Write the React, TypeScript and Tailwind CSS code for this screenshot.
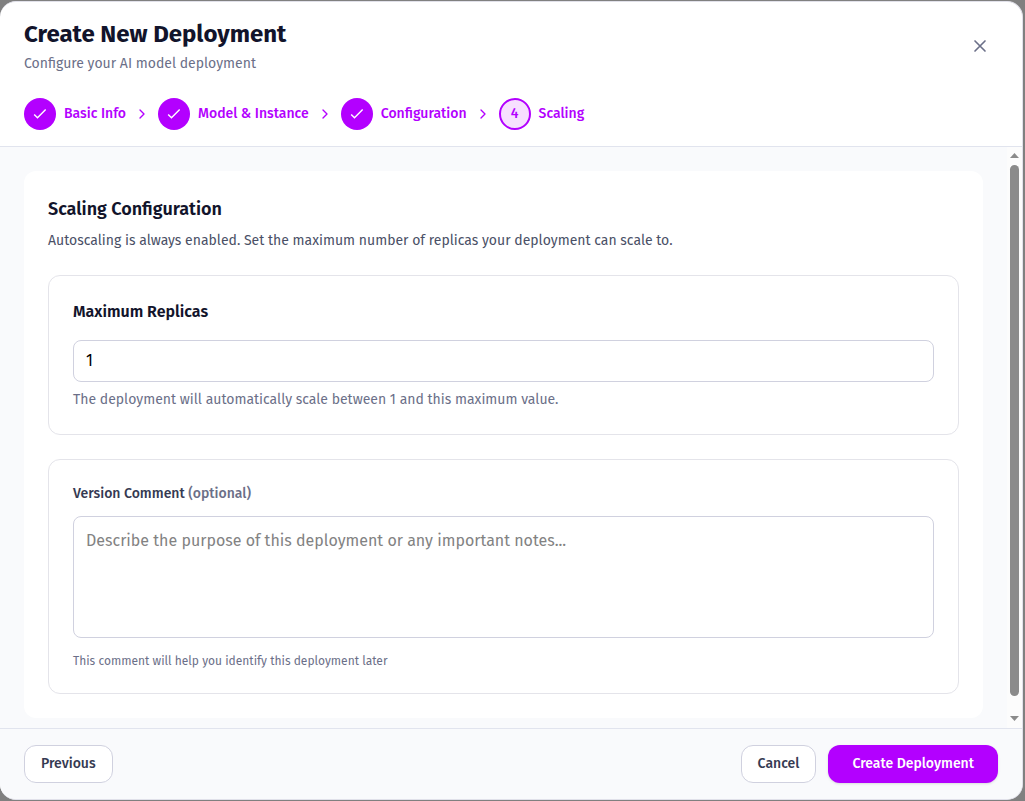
import { useState } from "react";

const steps = ["Basic Info", "Model & Instance", "Configuration", "Scaling"];
const currentStep = 3;

function CheckIcon() {
  return (
    <svg className="size-5" viewBox="0 0 24 24" fill="none" stroke="currentColor" strokeWidth={1.7} aria-hidden="true">
      <path d="M5 12.5l4 4L18.8 6.5" />
    </svg>
  );
}

function ChevronIcon() {
  return (
    <svg className="size-4" viewBox="0 0 24 24" fill="none" stroke="currentColor" strokeWidth={2} strokeLinecap="round" strokeLinejoin="round" aria-hidden="true">
      <path d="M9 6l6 6-6 6" />
    </svg>
  );
}

function CloseIcon() {
  return (
    <svg className="size-5" viewBox="0 0 24 24" fill="none" stroke="currentColor" strokeWidth={2} strokeLinecap="round" strokeLinejoin="round" aria-hidden="true">
      <path d="M6 18L18 6M6 6l12 12" />
    </svg>
  );
}

function Stepper() {
  return (
    <ol className="mt-6 flex items-center gap-2 text-sm font-medium text-[#b300ff]">
      {steps.map((label, i) => (
        <li key={label} className="flex items-center gap-2">
          {i < currentStep ? (
            <span className="flex size-8 items-center justify-center rounded-full bg-[#b300ff] text-white">
              <CheckIcon />
            </span>
          ) : (
            <span className="flex size-8 items-center justify-center rounded-full border-2 border-[#b300ff] bg-[#f7e0ff]">
              {i + 1}
            </span>
          )}
          <span>{label}</span>
          {i < steps.length - 1 && <ChevronIcon />}
        </li>
      ))}
    </ol>
  );
}

function ScrollTrack() {
  return (
    <div className="flex w-[15px] shrink-0 flex-col items-center bg-[#fcfcfc] py-1 text-[#8b8b8b]" aria-hidden="true">
      <svg className="h-3 w-[9px]" viewBox="0 0 9 12" fill="currentColor">
        <path d="M4.5 2L9 7H0z" />
      </svg>
      <div className="mt-[2px] w-[9px] flex-1 rounded-full bg-current" />
      <svg className="mt-4 h-3 w-[9px]" viewBox="0 0 9 12" fill="currentColor">
        <path d="M0 4h9L4.5 9z" />
      </svg>
    </div>
  );
}

export default function App() {
  const [replicas, setReplicas] = useState("1");
  const [comment, setComment] = useState("");

  return (
    <div className="h-screen bg-[#808080] py-px pr-[2px] font-['Fira_Sans','Noto_Sans',sans-serif]">
      <div role="dialog" aria-labelledby="dialog-title" className="flex h-full flex-col overflow-hidden rounded-2xl border-y border-r border-[#e1e1ea] bg-white">
        <header className="border-b border-[#e1e4ee] px-6 py-4">
          <div className="flex items-center justify-between">
            <div>
              <h2 id="dialog-title" className="text-2xl font-bold text-[#12142b]">Create New Deployment</h2>
              <p className="mt-1 text-sm text-[#6b6f88]">Configure your AI model deployment</p>
            </div>
            <button type="button" aria-label="Close" className="rounded-lg p-2 text-[#6b6f88]">
              <CloseIcon />
            </button>
          </div>
          <Stepper />
        </header>

        <div className="flex min-h-0 flex-1 bg-[#f9fafc]">
          <main className="min-w-0 flex-1 overflow-y-auto p-6 [scrollbar-width:none]">
            <section className="rounded-xl bg-white p-6">
              <h3 className="text-lg font-semibold text-[#12142b]">Scaling Configuration</h3>
              <p className="mt-2 text-sm text-[#4a5066]">
                Autoscaling is always enabled. Set the maximum number of replicas your deployment can scale to.
              </p>

              <div className="mt-6 rounded-xl border border-[#e4e4ea] p-6">
                <label htmlFor="max-replicas" className="block font-semibold text-[#12142b]">
                  Maximum Replicas
                </label>
                <input
                  id="max-replicas"
                  className="mt-4 block w-full rounded-lg border border-[#d0d1df] px-3 py-2 text-black outline-none"
                  inputMode="numeric"
                  value={replicas}
                  onChange={(e) => setReplicas(e.target.value)}
                />
                <p className="mt-2 text-sm text-[#6b6f88]">
                  The deployment will automatically scale between 1 and this maximum value.
                </p>
              </div>

              <div className="mt-6 rounded-xl border border-[#e4e4ea] p-6">
                <label htmlFor="version-comment" className="block text-sm font-medium text-[#353a52]">
                  Version Comment <span className="text-[#6b6f88]">(optional)</span>
                </label>
                <textarea
                  id="version-comment"
                  rows={4}
                  className="mt-3 block w-full resize-none rounded-lg border border-[#d0d1df] px-3 py-3 text-black outline-none placeholder:text-[#828282]"
                  placeholder="Describe the purpose of this deployment or any important notes..."
                  value={comment}
                  onChange={(e) => setComment(e.target.value)}
                />
                <p className="mt-[15px] text-xs text-[#6b6f88]">
                  This comment will help you identify this deployment later
                </p>
              </div>
            </section>
          </main>
          <ScrollTrack />
        </div>

        <footer className="flex items-center justify-between border-t border-[#e1e4ee] bg-[#f9fafc] px-6 py-4 text-sm font-medium">
          <button type="button" className="rounded-xl border border-[#d0d1df] bg-white px-4 py-2 text-[#353a52]">
            Previous
          </button>
          <div className="flex gap-3">
            <button type="button" className="rounded-xl border border-[#d0d1df] bg-white px-4 py-2 text-[#353a52]">
              Cancel
            </button>
            <button type="button" className="rounded-xl bg-[#b300ff] px-6 py-2 text-white shadow-sm">
              Create Deployment
            </button>
          </div>
        </footer>
      </div>
    </div>
  );
}
